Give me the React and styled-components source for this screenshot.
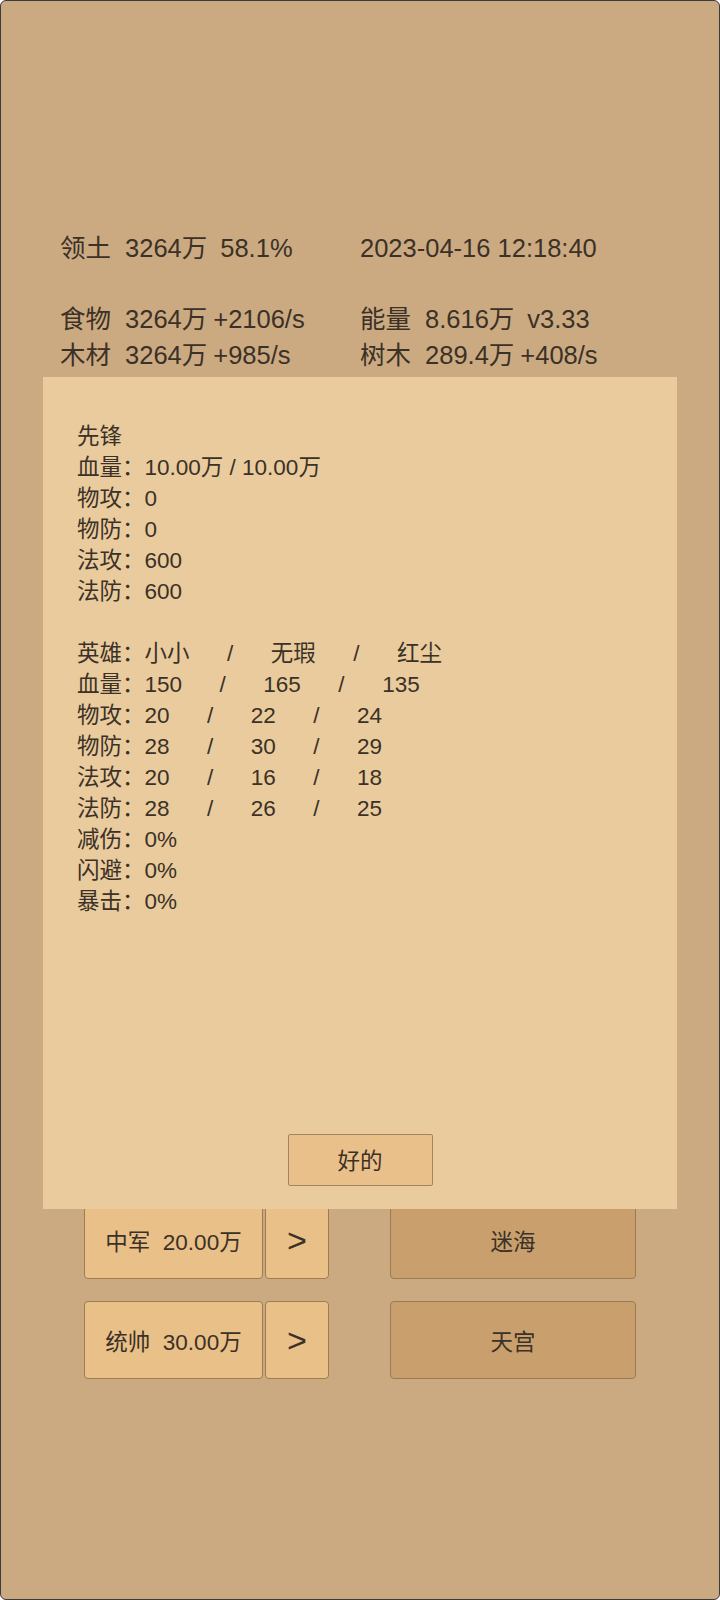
import React from 'react'
import styled, { createGlobalStyle } from 'styled-components'

const FONT = `"Liberation Sans", "Noto Sans CJK SC", sans-serif`

const GlobalStyle = createGlobalStyle`
    html, body {
        margin: 0;
        padding: 0;
    }
    body {
        font-family: ${FONT};
        color: #3b3127;
    }
`

const Screen = styled.div`
    position: relative;
    box-sizing: border-box;
    width: 720px;
    height: 1600px;
    border: 1px solid #3c3c3c;
    border-radius: 6px;
    background: #cbaa82;
    overflow: hidden;
`

const Stats = styled.div`
    display: grid;
    grid-template-columns: 300px 300px;
    grid-auto-rows: 35.6px;
    padding: 230px 0 0 59px;
    font-size: 25.5px;
    line-height: 35.6px;
    white-space: pre;
`

const Cell = styled.div``

const Gap = styled.span`
    display: inline-block;
    width: ${p => p.$w}px;
`

const Buttons = styled.div`
    display: flex;
    flex-direction: column;
    gap: 22px;
    margin-top: 828px;
    padding-left: 83px;
`

const ButtonRow = styled.div`
    display: flex;
    align-items: stretch;
    height: 78px;
`

const Pair = styled.div`
    display: flex;
    gap: 2px;
    margin-right: 61px;
`

const Tile = styled.button`
    box-sizing: border-box;
    width: ${p => p.$w}px;
    height: 78px;
    padding: 0;
    border: 1px solid ${p => (p.$dark ? '#9c7a52' : '#a07b52')};
    border-radius: 4px;
    background: ${p => (p.$dark ? '#c9a06d' : '#e9c088')};
    color: #3b3127;
    font-family: ${FONT};
    font-size: ${p => p.$size || 22.5}px;
    white-space: pre;
    display: flex;
    align-items: center;
    justify-content: center;
`

const Dialog = styled.div`
    position: absolute;
    top: 376px;
    left: 42px;
    width: 634px;
    height: 832px;
    box-sizing: border-box;
    background: #e9cb9e;
    display: flex;
    flex-direction: column;
    padding: 44px 34px 23px 34px;
`

const Info = styled.div`
    font-size: 22.5px;
    line-height: 31px;
    white-space: pre;
`

const Line = styled.div`
    height: 31px;
`

const Ok = styled.button`
    box-sizing: border-box;
    align-self: center;
    margin-top: auto;
    width: 145px;
    height: 52px;
    padding: 0 0 3px;
    border: 1px solid #a3845e;
    border-radius: 2px;
    background: #eac08a;
    color: #3b3127;
    font-family: ${FONT};
    font-size: 22.5px;
`

const SEP = '      /      '

const general = [
    ['血量：', '10.00万 / 10.00万'],
    ['物攻：', '0'],
    ['物防：', '0'],
    ['法攻：', '600'],
    ['法防：', '600'],
]

const heroes = [
    ['英雄：', ['小小', '无瑕', '红尘']],
    ['血量：', ['150', '165', '135']],
    ['物攻：', ['20', '22', '24']],
    ['物防：', ['28', '30', '29']],
    ['法攻：', ['20', '16', '18']],
    ['法防：', ['28', '26', '25']],
    ['减伤：', ['0%']],
    ['闪避：', ['0%']],
    ['暴击：', ['0%']],
]

const Stat = ({ label, value, extra, wide }) =>
    <Cell>
        {label}<Gap $w={14} />{value}
        {extra && <><Gap $w={wide ? 13 : 6} />{extra}</>}
    </Cell>

export default function App() {
    return (
        <Screen>
            <GlobalStyle />
            <Stats>
                <Stat label="领土" value="3264万" extra="58.1%" wide />
                <Cell>2023-04-16 12:18:40</Cell>
                <Cell />
                <Cell />
                <Stat label="食物" value="3264万" extra="+2106/s" />
                <Stat label="能量" value="8.616万" extra="v3.33" wide />
                <Stat label="木材" value="3264万" extra="+985/s" />
                <Stat label="树木" value="289.4万" extra="+408/s" />
            </Stats>

            <Buttons>
                <ButtonRow>
                    <Pair>
                        <Tile $w={179}>中军  20.00万</Tile>
                        <Tile $w={64} $size={34}>&gt;</Tile>
                    </Pair>
                    <Tile $w={246} $dark>迷海</Tile>
                </ButtonRow>
                <ButtonRow>
                    <Pair>
                        <Tile $w={179}>统帅  30.00万</Tile>
                        <Tile $w={64} $size={34}>&gt;</Tile>
                    </Pair>
                    <Tile $w={246} $dark>天宫</Tile>
                </ButtonRow>
            </Buttons>

            <Dialog>
                <Info>
                    <Line>先锋</Line>
                    {general.map(([k, v]) => <Line key={'g' + k}>{k}{v}</Line>)}
                    <Line />
                    {heroes.map(([k, v]) => <Line key={'h' + k}>{k}{v.join(SEP)}</Line>)}
                </Info>
                <Ok>好的</Ok>
            </Dialog>
        </Screen>
    )
}
